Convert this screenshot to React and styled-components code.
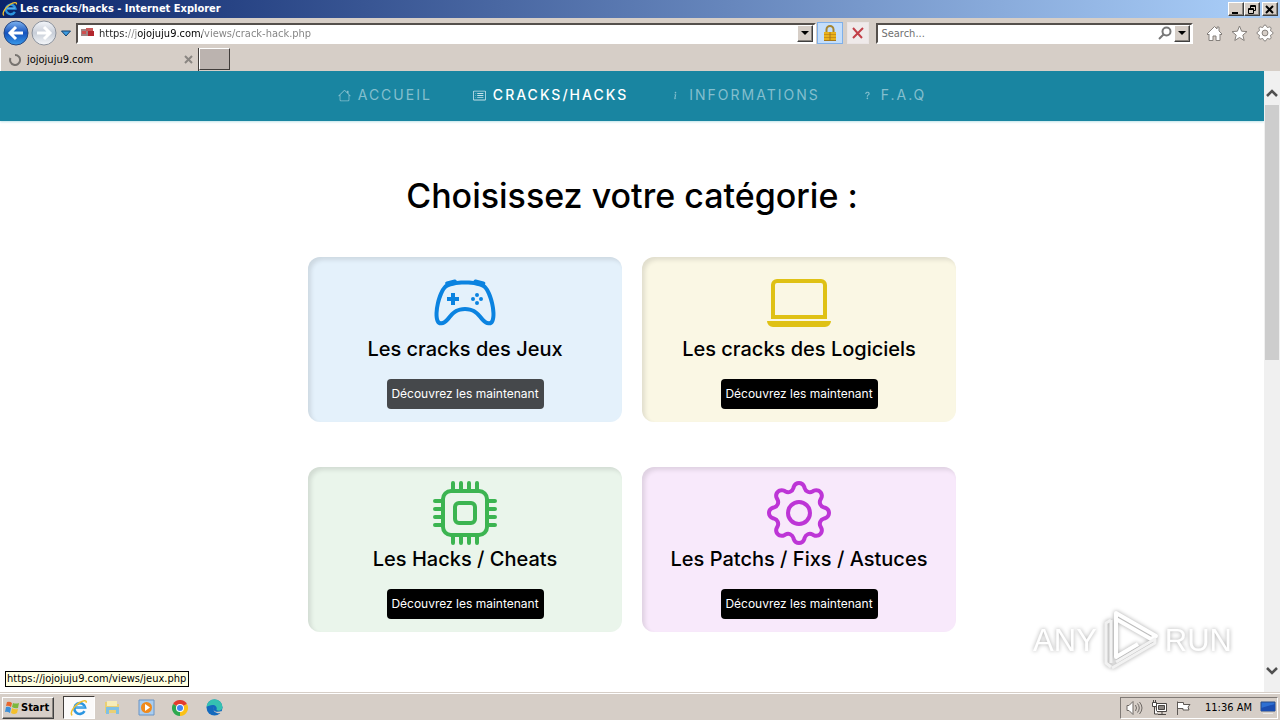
import React from "react";
import styled, { createGlobalStyle, css } from "styled-components";
import {
  BsHouse,
  BsCardList,
  BsInfo,
  BsQuestion,
  BsController,
  BsLaptop,
  BsCpu,
  BsGear,
  BsGearFill,
} from "react-icons/bs";

const GlobalStyle = createGlobalStyle`
  * { box-sizing: border-box; }
  body { margin: 0; background: #fff; }
  button, input { font: inherit; margin: 0; border-radius: 0; }
`;

const face = "#d6cec7";
const raised = css`
  border: 1px solid;
  border-color: #fff #404040 #404040 #fff;
  box-shadow: inset -1px -1px 0 #8a8580;
`;

const Desktop = styled.div`
  display: flex;
  flex-direction: column;
  height: 100vh;
  font: 11px/14px "DejaVu Sans Condensed", "DejaVu Sans", sans-serif;
  color: #000;
  background: ${face};
`;

/* ---------- browser frame ---------- */

const TitleBar = styled.header`
  display: flex;
  align-items: center;
  gap: 2px;
  height: 18px;
  padding: 0 2px;
  background: linear-gradient(to right, #0a246a, #a6caf5 96%);
  color: #fff;
  font-weight: bold;
`;

const WindowTitle = styled.span`
  flex: 1;
`;

const WindowButtons = styled.div`
  display: flex;
`;

const WindowButton = styled.button`
  ${raised}
  display: flex;
  width: 16px;
  height: 14px;
  padding: 0;
  margin-left: ${(p) => (p.$apart ? "2px" : "0")};
  align-items: center;
  justify-content: center;
  background: ${face};
`;

const Toolbar = styled.div`
  display: flex;
  align-items: center;
  height: 30px;
  padding: 0 3px;
`;

const RoundButton = styled.button`
  display: flex;
  padding: 0;
  margin-right: 2px;
  border: 0;
  background: none;
`;

const FlatButton = styled.button`
  display: flex;
  align-items: center;
  justify-content: center;
  width: ${(p) => p.$width || 25}px;
  height: 22px;
  padding: 0;
  border: 0;
  background: none;
`;

const PageTools = styled.div`
  display: flex;
  margin-left: 9px;
`;

const BoxButton = styled.button`
  display: flex;
  align-items: center;
  justify-content: center;
  width: ${(p) => (p.$active ? 26 : 22)}px;
  height: 22px;
  padding: 0;
  margin-left: ${(p) => (p.$active ? 1 : 4)}px;
  border: 1px solid ${(p) => (p.$active ? "#7fb0ea" : "#ebe5e5")};
  background: ${(p) => (p.$active ? "#c4defb" : "#efeaea")};
`;

const Field = styled.label`
  display: flex;
  align-items: center;
  flex: ${(p) => p.$grow} 1 0;
  height: 21px;
  padding: 1px 1px 1px 3px;
  margin-left: ${(p) => p.$left}px;
  border: 2px solid;
  border-color: #55504c #fff #fff #55504c;
  background: #fff;
`;

const TextInput = styled.input`
  flex: 1;
  min-width: 0;
  height: 16px;
  padding: 0;
  border: 0;
  outline: 0;
  background: none;
  color: #000;
  &::placeholder { color: #707070; opacity: 1; }
`;

const AddressInput = styled(TextInput)`
  margin-left: 4px;
  background: linear-gradient(to right, #222 0 28px, #888 28px 38px, #000 38px 103px, #808080 103px);
  background-clip: text;
  -webkit-text-fill-color: transparent;
`;

const DropButton = styled.button`
  ${raised}
  display: flex;
  align-items: center;
  justify-content: center;
  width: 16px;
  height: 17px;
  padding: 0;
  background: ${face};
`;

const TabBar = styled.div`
  display: flex;
  height: 23px;
`;

const Tab = styled.div`
  display: flex;
  align-items: center;
  gap: 6px;
  width: 199px;
  padding: 0 5px 0 8px;
  border-left: 1px solid #fff;
  border-right: 1px solid #403c3a;
`;

const TabName = styled.span`
  flex: 1;
`;

const TabClose = styled.button`
  display: flex;
  padding: 0;
  border: 0;
  background: none;
`;

const NewTab = styled.button`
  width: 31px;
  height: 22px;
  border: 1px solid;
  border-color: #fff #403c3a #403c3a #fff;
  background: #bbb3af;
`;

/* ---------- web page ---------- */

const Viewport = styled.div`
  position: relative;
  display: flex;
  flex: 1;
  min-height: 0;
  background: #fff;
`;

const Page = styled.div`
  flex: 1;
  overflow: hidden;
  font-family: Inter, "Open Sans", sans-serif;
`;

const SiteNav = styled.nav`
  display: flex;
  justify-content: center;
  gap: 41px;
  height: 50px;
  padding-bottom: 2px;
  align-items: center;
  background: #1985a1;
  box-shadow: 0 1px 2px #bfe3ea;
`;

const NavLink = styled.a`
  display: flex;
  align-items: center;
  gap: 7px;
  font-size: 14px;
  line-height: 20px;
  font-weight: ${(p) => (p.$active ? 500 : 400)};
  letter-spacing: 2px;
  text-decoration: none;
  color: ${(p) => (p.$active ? "#fff" : "#84bfce")};
  svg { width: 13px; height: 13px; color: ${(p) => (p.$active ? "#c5e2ea" : "#84bfce")}; }
`;

const Heading = styled.h1`
  margin: 49px 0 35px;
  text-align: center;
  font-size: 34px;
  line-height: 52px;
  font-weight: 500;
`;

const Cards = styled.main`
  display: grid;
  grid-template-columns: repeat(2, 314px);
  justify-content: center;
  gap: 45px 20px;
`;

const Card = styled.section`
  display: flex;
  flex-direction: column;
  align-items: center;
  height: 165px;
  padding-top: 14px;
  border-radius: 12px;
  background: ${(p) => p.$bg};
  box-shadow: inset 3px 3px 4px rgba(0, 0, 0, 0.1);
  > svg { width: 64px; height: 64px; flex: none; color: ${(p) => p.$ink}; }
`;

const CardTitle = styled.h2`
  margin: 0 0 16px;
  font-size: 20px;
  line-height: 28px;
  font-weight: 500;
  color: #000;
`;

const CardButton = styled.button`
  width: 157px;
  height: 30px;
  padding: 0;
  border: 0;
  border-radius: 4px;
  font-size: 12px;
  white-space: nowrap;
  color: #fff;
  background: ${(p) => (p.$hovered ? "#45484b" : "#000")};
`;

const ScrollBar = styled.div`
  display: flex;
  flex-direction: column;
  align-items: center;
  width: 16px;
  background: #f0f0f0;
`;

const ScrollArrow = styled.button`
  display: flex;
  justify-content: center;
  width: 100%;
  padding: ${(p) => p.$pad};
  border: 0;
  background: none;
`;

const ScrollThumb = styled.div`
  width: 14px;
  height: 41%;
  margin-bottom: auto;
  background: #cdcdcd;
`;

const StatusTip = styled.div`
  position: absolute;
  left: 5px;
  bottom: 5px;
  padding: 0 2px 0 1px;
  border: 1px solid #000;
  background: #ffffe1;
`;

const Watermark = styled.div`
  position: absolute;
  right: 48px;
  bottom: 20px;
  display: flex;
  align-items: center;
  gap: 6px;
  font: 31px/62px "Liberation Sans", sans-serif;
  color: #fff;
  filter: drop-shadow(0 0 2px #a8a8a8);
`;

/* ---------- taskbar ---------- */

const TaskBar = styled.footer`
  display: flex;
  align-items: center;
  height: 28px;
  padding: 2px 2px 0;
  border-top: 1px solid ${face};
  box-shadow: inset 0 1px 0 #fff;
`;

const StartButton = styled.button`
  ${raised}
  display: flex;
  align-items: center;
  gap: 1px;
  width: 52px;
  height: 22px;
  padding: 0 2px 0 1px;
  margin-right: 9px;
  font-weight: bold;
  background: ${face};
`;

const TaskButton = styled.button`
  display: flex;
  align-items: center;
  justify-content: center;
  width: ${(p) => (p.$active ? 32 : 34)}px;
  height: 23px;
  padding: 0;
  border: 1px solid;
  border-color: ${(p) => (p.$active ? "#403c3a #fff #fff #403c3a" : "transparent")};
  background: ${(p) => (p.$active ? "#fbfafa" : "none")};
`;

const Tray = styled.div`
  display: flex;
  align-items: center;
  gap: 8px;
  height: 22px;
  margin-left: auto;
  padding: 0 1px 0 5px;
  border: 1px solid;
  border-color: #807a76 #fff #fff #807a76;
`;

const Clock = styled.time`
  margin-left: 5px;
`;

/* ---------- drawings ---------- */

const IeLogo = ({ size }) => (
  <svg width={size} height={size} viewBox="0 0 18 18" fill="none">
    <path d="M14.500 12.200a5.400 5.400 0 1 1 .6-3.700H5.200" stroke="#2b95e0" strokeWidth="2.600" />
    <path d="M5.500 8h9" stroke="#7cc8f5" strokeWidth="1" />
    <path d="M2.200 16.400C-.5 14 3.500 7.500 9 4c4-2.600 8.300-3.300 7-.2" stroke="#f0c030" strokeWidth="1.500" />
  </svg>
);

const Arrow = ({ forward }) => (
  <svg width="26" height="26" viewBox="0 0 26 26">
    <defs>
      <linearGradient id={forward ? "fwd" : "back"} x2="0" y2="1">
        <stop offset="0" stopColor={forward ? "#f4f6fa" : "#7fb4f0"} />
        <stop offset=".5" stopColor={forward ? "#c8ced8" : "#1552bd"} />
        <stop offset="1" stopColor={forward ? "#f6f8fb" : "#3a9bea"} />
      </linearGradient>
    </defs>
    <circle cx="13" cy="13" r="12" fill={`url(#${forward ? "fwd" : "back"})`} stroke={forward ? "#8c929c" : "#27467f"} />
    <path
      d={forward ? "M6 13h12M13 7l6 6-6 6" : "M20 13H8M13 7l-6 6 6 6"}
      fill="none"
      stroke="#fff"
      strokeWidth="3"
    />
  </svg>
);

const Caret = () => (
  <svg width="8" height="5" viewBox="0 0 8 5"><path d="M0 0h8L4 4z" fill="#000" /></svg>
);

const Chevron = ({ down }) => (
  <svg width="12" height="8" viewBox="0 0 12 8" fill="none" stroke="#505050" strokeWidth="2.500">
    <path d={down ? "M1 1l5 5 5-5" : "M1 7l5-5 5 5"} />
  </svg>
);

const Play = () => (
  <svg width="56" height="62" viewBox="0 0 56 62" fill="none" stroke="#fff" strokeWidth="4" strokeLinejoin="round">
    <path d="M13 3l40 23-5 3L13 9zM13 9v38l22-13" />
    <path d="M8 10l-5 3v40l5 4M8 10v43M9 58l43-25v-4L13 52" stroke="#f2f2f2" strokeWidth="3" />
  </svg>
);

const categories = [
  { title: "Les cracks des Jeux", Icon: BsController, bg: "#e4f1fb", ink: "#0b83e0", hovered: true },
  { title: "Les cracks des Logiciels", Icon: BsLaptop, bg: "#faf7e4", ink: "#dfc115" },
  { title: "Les Hacks / Cheats", Icon: BsCpu, bg: "#eaf5eb", ink: "#3cb451" },
  { title: "Les Patchs / Fixs / Astuces", Icon: BsGear, bg: "#f8e9fb", ink: "#bd35d6" },
];

const links = [
  { label: "ACCUEIL", Icon: BsHouse },
  { label: "CRACKS/HACKS", Icon: BsCardList, active: true },
  { label: "INFORMATIONS", Icon: BsInfo },
  { label: "F.A.Q", Icon: BsQuestion },
];

export default function App() {
  return (
    <Desktop>
      <GlobalStyle />
      <TitleBar>
        <IeLogo size={16} />
        <WindowTitle>Les cracks/hacks - Internet Explorer</WindowTitle>
        <WindowButtons>
          <WindowButton aria-label="Minimize">
            <svg width="10" height="9"><path d="M1 7h6v2H1z" /></svg>
          </WindowButton>
          <WindowButton aria-label="Restore">
            <svg width="10" height="9" fill="none" stroke="#000"><path d="M3.500 3V.5h5v5H7M3 1.500h6M1.500 3.500h5v5h-5zM1 4.500h6" /></svg>
          </WindowButton>
          <WindowButton $apart aria-label="Close">
            <svg width="10" height="9" stroke="#000" strokeWidth="2"><path d="M1 1l7 7M8 1L1 8" /></svg>
          </WindowButton>
        </WindowButtons>
      </TitleBar>

      <Toolbar>
        <RoundButton aria-label="Back"><Arrow /></RoundButton>
        <RoundButton aria-label="Forward"><Arrow forward /></RoundButton>
        <FlatButton $width={14} aria-label="Recent pages">
          <svg width="10" height="7"><path d="M.5 1h9L5 6z" fill="#3c9be0" stroke="#12406e" /></svg>
        </FlatButton>
        <Field $grow={731} $left={3}>
          <svg width="14" height="12">
            <path d="M0 2h7v7H0z" fill="#a08484" />
            <path d="M5 1h7v3H5z" fill="#c85a5a" />
            <path d="M7 4h6v5H7z" fill="#b3262d" />
            <path d="M1 4h4v3H1z" fill="#d05050" />
          </svg>
          <AddressInput aria-label="Address" defaultValue="https://jojojuju9.com/views/crack-hack.php" />
          <DropButton aria-label="Show addresses"><Caret /></DropButton>
        </Field>
        <BoxButton $active aria-label="Security report">
          <svg width="14" height="17">
            <path d="M3.500 8V4.500a3.500 3.500 0 0 1 7 0V8" fill="none" stroke="#a58530" strokeWidth="2" />
            <path d="M1 7h12v9H1z" fill="#e9b21c" />
            <path d="M1 9.500h12M1 12.500h12" stroke="#c9901a" />
            <path d="M1 15.500h12M7 7v9" stroke="#a5761a" />
          </svg>
        </BoxButton>
        <BoxButton aria-label="Stop">
          <svg width="12" height="12" stroke="#c23f48" strokeWidth="2"><path d="M1 1l9 10M11 1L1 11" /></svg>
        </BoxButton>
        <Field $grow={308} $left={7}>
          <TextInput aria-label="Search" placeholder="Search..." />
          <FlatButton $width={18} aria-label="Run search">
            <svg width="14" height="14" fill="none" stroke="#777" strokeWidth="2"><circle cx="8.500" cy="5.500" r="4" /><path d="M5.500 8.500L1 13" /></svg>
          </FlatButton>
          <DropButton aria-label="Search providers"><Caret /></DropButton>
        </Field>
        <PageTools>
          <FlatButton aria-label="Home">
            <svg width="17" height="17" fill="#fff" stroke="#85807c"><path d="M1 9l7.500-7.500L11 4V2h2v4l3 3-1 1-1-1v6.500h-4V11H7v4.500H3V9l-1 1z" /></svg>
          </FlatButton>
          <FlatButton aria-label="Favorites">
            <svg width="17" height="17" fill="#fff" stroke="#85807c"><path d="M8.500 1l2.100 5.200 5.400.4-4.200 3.500 1.400 5.400-4.700-3-4.700 3 1.400-5.400L1 6.600l5.400-.4z" /></svg>
          </FlatButton>
          <FlatButton aria-label="Tools">
            <BsGearFill size={16} color="#fff" stroke="#85807c" strokeWidth="1" overflow="visible" />
          </FlatButton>
        </PageTools>
      </Toolbar>

      <TabBar>
        <Tab>
          <svg width="12" height="12" fill="none" stroke="#77736f" strokeWidth="2"><path d="M6 1a5 5 0 1 1-4.500 3" /></svg>
          <TabName>jojojuju9.com</TabName>
          <TabClose aria-label="Close tab">
            <svg width="9" height="9" stroke="#8a8682" strokeWidth="2"><path d="M1 1l7 7M8 1L1 8" /></svg>
          </TabClose>
        </Tab>
        <NewTab aria-label="New tab" />
      </TabBar>

      <Viewport>
        <Page>
          <SiteNav>
            {links.map(({ label, Icon, active }) => (
              <NavLink key={label} href="#" $active={active}>
                <Icon />
                {label}
              </NavLink>
            ))}
          </SiteNav>
          <Heading>Choisissez votre catégorie :</Heading>
          <Cards>
            {categories.map(({ title, Icon, bg, ink, hovered }) => (
              <Card key={title} $bg={bg} $ink={ink}>
                <Icon />
                <CardTitle>{title}</CardTitle>
                <CardButton $hovered={hovered}>Découvrez les maintenant</CardButton>
              </Card>
            ))}
          </Cards>
        </Page>
        <ScrollBar>
          <ScrollArrow $pad="18px 0 8px" aria-label="Scroll up"><Chevron /></ScrollArrow>
          <ScrollThumb />
          <ScrollArrow $pad="8px 0 17px" aria-label="Scroll down"><Chevron down /></ScrollArrow>
        </ScrollBar>
        <StatusTip>https://jojojuju9.com/views/jeux.php</StatusTip>
        <Watermark>
          <span>ANY</span>
          <Play />
          <span>RUN</span>
        </Watermark>
      </Viewport>

      <TaskBar>
        <StartButton>
          <svg width="16" height="16">
            <path d="M3 2q3-1 5 1L7 7Q4 5 2 6z" fill="#e8662c" />
            <path d="M9 3q3 1 6 0l-1 5q-3 1-6-1z" fill="#7cb83c" />
            <path d="M2 7q3-1 5 1l-1 5q-3-2-5-1z" fill="#3c8fd8" />
            <path d="M8 8q3 2 6 1l-1 4q-3 2-6 0z" fill="#f4c02c" />
          </svg>
          Start
        </StartButton>
        <TaskButton $active aria-label="Internet Explorer"><IeLogo size={18} /></TaskButton>
        <TaskButton aria-label="Explorer">
          <svg width="17" height="17">
            <path d="M1 3h5l1 2h8v9H1z" fill="#e9cf74" />
            <path d="M3 2h10v5H3z" fill="#f6ecb8" />
            <path d="M2 8h13v7h-3v-4H5v4H2z" fill="#7fc0e4" />
          </svg>
        </TaskButton>
        <TaskButton aria-label="Media Player">
          <svg width="17" height="17">
            <path d="M1 1h15v15H1z" fill="#a9cdf0" stroke="#6a94c4" />
            <circle cx="8.500" cy="8.500" r="5.500" fill="#f08a1c" />
            <path d="M7 5l5 3.500L7 12z" fill="#fff" />
          </svg>
        </TaskButton>
        <TaskButton aria-label="Chrome">
          <svg width="16" height="16">
            <path d="M8 8L1.070 4A8 8 0 0 1 14.930 4z" fill="#e33b2e" />
            <path d="M8 8l6.930-4A8 8 0 0 1 8 16z" fill="#fbc116" />
            <path d="M8 8v8A8 8 0 0 1 1.070 4z" fill="#2da94f" />
            <circle cx="8" cy="8" r="4" fill="#fff" />
            <circle cx="8" cy="8" r="3" fill="#4285f4" />
          </svg>
        </TaskButton>
        <TaskButton aria-label="Edge">
          <svg width="17" height="17">
            <circle cx="8.500" cy="8.500" r="8" fill="#1469bd" />
            <path d="M.5 8a8 8 0 0 1 16 .5c0 3-4 4-6 2.500 1-3-1-5-4-5-2 0-5 1-6 2z" fill="#35c1b1" />
            <path d="M8 8c-2 4 2 6 8 4l-1 2c-4 1-9-1-7-6z" fill="#d6cec7" />
          </svg>
        </TaskButton>
        <Tray>
          <svg width="17" height="16" fill="#fff" stroke="#6e6965"><path d="M1 5.500h2l4-4v13l-4-4H1z" /><path d="M9.500 5q2 3 0 6M11.500 3.500q3.500 4.500 0 9M13.500 2q5 6 0 12" fill="none" /></svg>
          <svg width="16" height="16" fill="#fff" stroke="#4a4643"><path d="M5.500 3.500h10v8h-10zM7 14.500h8M11 12v2" /><path d="M7.500 5.500h6v4h-6z" fill="#8b8682" /><path d="M1.500 2.500h4v4h-4zM2.500 0v2M4.500 0v2M3.500 7v7H7" /></svg>
          <svg width="17" height="16" fill="#fff" stroke="#5e5955"><path d="M2.500 15V1.500M2.500 2.500h6v2h6.500l-2 2.500 1 3H8V8.500H2.500z" /></svg>
          <Clock>11:36 AM</Clock>
          <svg width="16" height="14">
            <path d="M1 1h14v9H1z" fill="#2e6fd2" stroke="#274a85" />
            <path d="M1 7l14-4v7H1z" fill="#1b4db0" />
            <path d="M3 12h10v1H3z" fill="#e8e8e8" />
          </svg>
        </Tray>
      </TaskBar>
    </Desktop>
  );
}
